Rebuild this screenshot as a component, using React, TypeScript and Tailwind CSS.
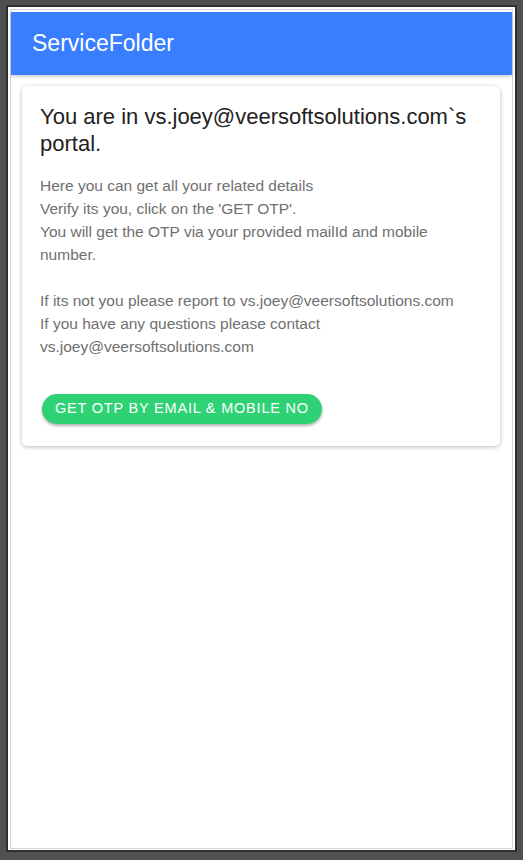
export default function App() {
  return (
    <div
      className="h-[860px] w-[523px] bg-[#505050] pl-[6px] pr-[6px] pt-[5px] pb-[8px]"
      style={{ fontFamily: 'Arial, "Liberation Sans", sans-serif' }}
    >
      <div className="h-full w-full bg-[#2f2f2f] p-[2px]">
        <div className="flex h-full flex-col bg-white pl-[2px] pr-[2px] pt-[2px] pb-[1px]">
          <div className="flex flex-1 flex-col border border-[#d9d4d4] bg-white pt-[2px]">
            {/* Header */}
            <header className="flex h-[63px] shrink-0 items-center bg-[#397eff] pl-[21px] shadow-[0_2px_3px_rgba(0,0,0,0.18)]">
              <h1 className="text-[23px] text-white">ServiceFolder</h1>
            </header>

            {/* Content */}
            <div className="pl-[11px] pr-[12px] pt-[11px]">
              <div className="rounded-[5px] bg-white pl-[18px] pr-[22px] pt-[17px] pb-[22px] shadow-[0_1px_4px_rgba(0,0,0,0.28)]">
                <h2 className="text-[22px] leading-[27px] text-[#222]">
                  You are in vs.joey@veersoftsolutions.com`s portal.
                </h2>
                <div className="mt-[17px] text-[15.5px] leading-[23px] text-[#707070]">
                  <p>Here you can get all your related details</p>
                  <p>Verify its you, click on the 'GET OTP'.</p>
                  <p>You will get the OTP via your provided mailId and mobile number.</p>
                  <p className="mt-[23px]">If its not you please report to vs.joey@veersoftsolutions.com</p>
                  <p>If you have any questions please contact vs.joey@veersoftsolutions.com</p>
                </div>
                <button className="mt-[36px] ml-[2px] h-[30px] rounded-full bg-[#2ed274] px-[13px] text-[14.5px] tracking-[0.8px] text-white shadow-[0_2px_3px_rgba(0,0,0,0.3)]">
                  GET OTP BY EMAIL &amp; MOBILE NO
                </button>
              </div>
            </div>
          </div>
        </div>
      </div>
    </div>
  );
}
